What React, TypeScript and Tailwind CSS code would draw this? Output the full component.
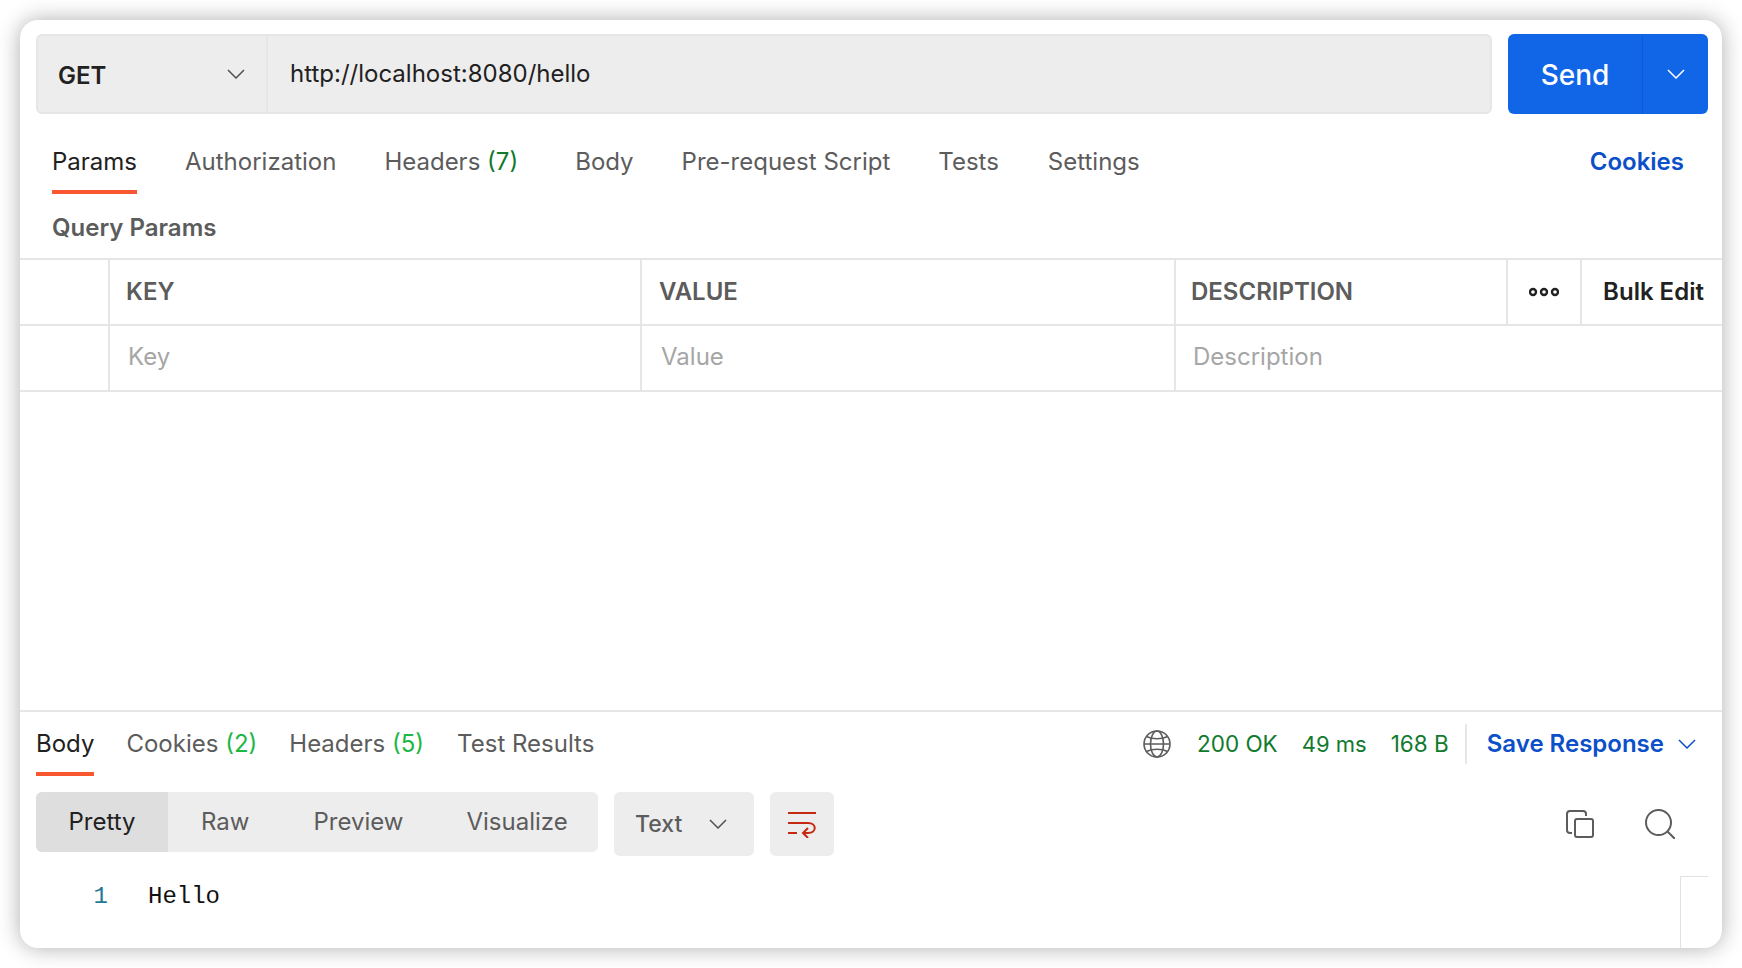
const Chevron = ({ className }: { className: string }) => (
  <svg viewBox="0 0 18 10" fill="none" stroke="currentColor" strokeWidth="1.5" className={className}>
    <path d="M1 1l8 8 8-8" />
  </svg>
);

const Count = ({ n, color }: { n: number; color: string }) => <span className={color}>({n})</span>;

const App = () => {
  return (
    <div className="h-[968px] w-[1742px] bg-white p-5 font-['Inter',sans-serif]">
      <div className="relative flex h-[928px] flex-col overflow-hidden rounded-[18px] bg-white shadow-[0_0_22px_rgba(0,0,0,0.32)]">
        {/* request bar */}
        <div className="mt-3.5 flex h-20 pl-4 pr-3.5">
          <div className="flex w-[1456px] rounded-md border-2 border-[#e6e6e6] bg-[#ededed]">
            <div className="flex w-[230px] items-center justify-between border-r-2 border-[#e6e6e6] pl-[20px] pr-[21px] text-[24px] font-semibold text-[#212121]">
              <span className="pt-1">GET</span>
              <Chevron className="h-[10px] w-[18px] text-[#505050]" />
            </div>
            <div className="flex flex-1 items-center pl-[22px] text-[24px] text-[#212121]">http://localhost:8080/hello</div>
          </div>
          <div className="ml-4 flex w-[200px] rounded-md bg-[#1166e8] text-white">
            <div className="flex w-[135px] items-center justify-center border-r border-[#0e5bd0] pt-0.5 text-[28px] font-medium">Send</div>
            <div className="flex flex-1 items-center justify-center">
              <Chevron className="h-[10px] w-[18px]" />
            </div>
          </div>
        </div>

        {/* request tabs */}
        <div className="mt-[16px] flex h-[64px] items-start pl-8 pr-[38px] text-[24px] leading-[64px] text-[#5c5c5c]">
          <div className="h-[64px] border-b-4 border-[#f9572f] text-[#212121]">Params</div>
          <div className="ml-[48px]">Authorization</div>
          <div className="ml-[48px]">
            Headers <Count n={7} color="text-[#117a2d]" />
          </div>
          <div className="ml-[57px]">Body</div>
          <div className="ml-[48px]">Pre-request Script</div>
          <div className="ml-[48px]">Tests</div>
          <div className="ml-[49px]">Settings</div>
          <div className="ml-auto font-semibold text-[#0b4fc9]">Cookies</div>
        </div>

        <div className="mt-[16px] h-[48px] pl-8 text-[24px] leading-[36px] font-semibold text-[#5c5c5c]">Query Params</div>

        {/* params table */}
        <div className="grid grid-cols-[90px_532px_534px_332px_74px_1fr] border-y-2 border-[#e6e6e6] text-[24px]">
          <div className="h-[66px] border-r-2 border-b-2 border-[#e6e6e6]" />
          <div className="flex items-center border-r-2 border-b-2 border-[#e6e6e6] pl-4 font-semibold text-[#5c5c5c]">KEY</div>
          <div className="flex items-center border-r-2 border-b-2 border-[#e6e6e6] pl-[17px] font-semibold text-[#5c5c5c]">VALUE</div>
          <div className="flex items-center border-r-2 border-b-2 border-[#e6e6e6] pl-[15px] font-semibold text-[#5c5c5c]">DESCRIPTION</div>
          <div className="flex items-center justify-center border-r-2 border-b-2 border-[#e6e6e6]">
            <svg viewBox="0 0 30 10" fill="none" stroke="#212121" strokeWidth="2.4" className="h-[10px] w-[30px]">
              <circle cx="4" cy="5" r="3" />
              <circle cx="15" cy="5" r="3" />
              <circle cx="26" cy="5" r="3" />
            </svg>
          </div>
          <div className="flex items-center justify-center border-b-2 border-[#e6e6e6] pl-[3px] font-semibold text-[#212121]">Bulk Edit</div>
          <div className="h-[64px] border-r-2 border-[#e6e6e6]" />
          <div className="flex items-center border-r-2 border-[#e6e6e6] pb-0.5 pl-[18px] text-[#a6a6a6]">Key</div>
          <div className="flex items-center border-r-2 border-[#e6e6e6] pb-0.5 pl-[19px] text-[#a6a6a6]">Value</div>
          <div className="col-span-3 flex items-center pb-0.5 pl-[17px] text-[#a6a6a6]">Description</div>
        </div>

        {/* response header */}
        <div className="mt-auto flex h-[66px] items-start border-t-2 border-[#e6e6e6] pl-4 pr-[26px] text-[24px] leading-[64px] text-[#5c5c5c]">
          <div className="h-[64px] border-b-4 border-[#f9572f] text-[#212121]">Body</div>
          <div className="ml-[32px]">
            Cookies <Count n={2} color="text-[#1db745]" />
          </div>
          <div className="ml-[32px]">
            Headers <Count n={5} color="text-[#1db745]" />
          </div>
          <div className="ml-[33px]">Test Results</div>
          <div className="ml-auto flex h-[64px] items-center text-[#117a2d]">
            <svg viewBox="0 0 28 28" fill="none" stroke="#5c5c5c" strokeWidth="1.6" className="mr-[26px] h-[28px] w-[28px]">
              <circle cx="14" cy="14" r="13" />
              <ellipse cx="14" cy="14" rx="6.5" ry="13" />
              <path d="M3.5 6.5c6 3 15 3 21 0M3.5 21.5c6-3 15-3 21 0M1 14h26" />
            </svg>
            <span className="text-[22.5px]">200 OK</span>
            <span className="ml-[24px] text-[22px]">49 ms</span>
            <span className="ml-[24px] text-[22.5px]">168 B</span>
            <div className="ml-[16px] h-[40px] w-0.5 bg-[#e6e6e6]" />
            <span className="ml-[20px] font-semibold text-[#0b4fc9]">Save Response</span>
            <Chevron className="ml-[14px] h-[10px] w-[18px] text-[#0b4fc9]" />
          </div>
        </div>

        {/* response toolbar */}
        <div className="mt-4 flex items-start pl-4 pr-[47px] text-[24px] text-[#5c5c5c]">
          <div className="flex h-[60px] w-[562px] items-center overflow-hidden rounded-md bg-[#ededed]">
            <div className="flex h-full w-[132px] items-center justify-center bg-[#dedede] text-[#212121]">Pretty</div>
            <div className="ml-[33px]">Raw</div>
            <div className="ml-[64px]">Preview</div>
            <div className="ml-[63px]">Visualize</div>
          </div>
          <div className="ml-4 flex h-[64px] w-[140px] items-center rounded-md bg-[#ededed] pl-[21px] text-[23px] font-medium">
            Text
            <Chevron className="ml-[27px] h-[10px] w-[18px] text-[#505050]" />
          </div>
          <div className="ml-4 flex h-[64px] w-[64px] items-center justify-center rounded-md bg-[#ededed]">
            <svg viewBox="0 0 28 28" fill="none" stroke="#c6290f" strokeWidth="2" className="h-[28px] w-[28px]">
              <path d="M0 3h28M0 13h20c9 0 9 10 0 10h-4M0 23h9M20 18l-5 5 5 5" />
            </svg>
          </div>
          <svg viewBox="0 0 28 28" fill="none" stroke="#5c5c5c" strokeWidth="2" className="mt-[18px] ml-auto h-[28px] w-[28px]">
            <path d="M6 23H4a3 3 0 0 1-3-3V4a3 3 0 0 1 3-3h13a3 3 0 0 1 3 3v2" />
            <rect x="9" y="9" width="18" height="18" rx="2" />
          </svg>
          <svg viewBox="0 0 30 30" fill="none" stroke="#5c5c5c" strokeWidth="2" className="mt-[17px] ml-[51px] h-[30px] w-[30px]">
            <circle cx="13.5" cy="13.5" r="12.5" />
            <path d="M22.5 22.5L30 30" />
          </svg>
        </div>

        {/* editor */}
        <div className="h-[92px] pt-[17px] font-['Liberation_Mono',monospace] text-[24px] leading-[48px]">
          <div className="flex">
            <span className="w-[104px] pr-[16px] text-right text-[#237893]">1</span>
            <span className="ml-[24px] text-[#111111]">Hello</span>
          </div>
        </div>

        <div className="absolute right-[14px] bottom-0 h-[72px] w-[28px] border-t border-l border-[#e2e2e2]" />
      </div>
    </div>
  );
};

export default App;
